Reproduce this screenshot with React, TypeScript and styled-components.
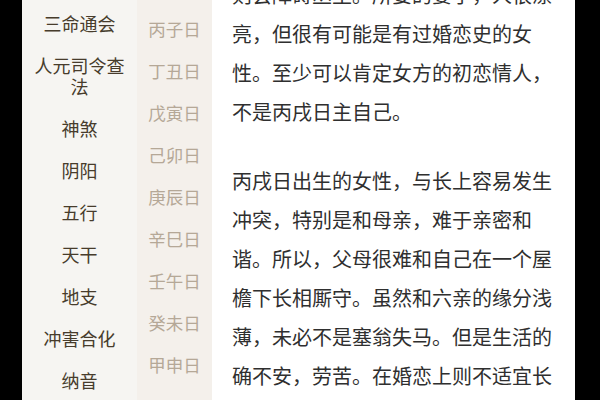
import styled, { createGlobalStyle } from "styled-components";

const GlobalStyle = createGlobalStyle`
  html, body {
    margin: 0;
    padding: 0;
    background: #000;
  }
  body {
    font-family: "Noto Sans CJK SC", "Noto Sans", sans-serif;
  }
  #root {
    height: 400px;
    overflow: hidden;
  }
`;

const Page = styled.div`
  display: flex;
  width: 600px;
  height: 400px;
  overflow: hidden;
  background: #000;
`;

const Edge = styled.div<{ $w: number }>`
  flex: 0 0 ${(p) => p.$w}px;
  background: #000;
`;

const Sidebar = styled.ul`
  flex: 0 0 115px;
  margin: 0;
  padding: 2px 0 0;
  list-style: none;
  background: #f6f5f2;
`;

const Category = styled.li`
  padding: 10.5px 8px;
  text-align: center;
  font-size: 18px;
  line-height: 21px;
  color: #473c2c;
`;

const DayList = styled.ul`
  flex: 0 0 75px;
  margin: 0;
  padding: 8px 0 0;
  list-style: none;
  background: #f4f0eb;
`;

const Day = styled.li`
  height: 42px;
  line-height: 42px;
  text-align: center;
  font-size: 17.5px;
  color: #b5a897;
`;

const Article = styled.article`
  flex: 0 0 363px;
  background: #fff;
  padding: 0 0 0 20px;
  box-sizing: border-box;
  overflow: hidden;
`;

const Body = styled.div`
  width: 320px;
  margin-top: -25px;
`;

const Para = styled.p`
  margin: 0 0 30px;
  font-size: 20px;
  line-height: 39px;
  color: #2f2f2f;
  word-break: break-all;
  line-break: strict;
`;

const categories = [
  "三命通会",
  "人元司令查法",
  "神煞",
  "阴阳",
  "五行",
  "天干",
  "地支",
  "冲害合化",
  "纳音",
];

const days = [
  "丙子日",
  "丁丑日",
  "戊寅日",
  "己卯日",
  "庚辰日",
  "辛巳日",
  "壬午日",
  "癸未日",
  "甲申日",
];

const App = () => {
  return (
    <>
      <GlobalStyle />
      <Page>
        <Edge $w={22} />
        <Sidebar>
          {categories.map((c) => (
            <Category key={c}>{c}</Category>
          ))}
        </Sidebar>
        <DayList>
          {days.map((d) => (
            <Day key={d}>{d}</Day>
          ))}
        </DayList>
        <Article>
          <Body>
            <Para>
              则会障碍丛生。所娶的妻子，人很漂亮，但很有可能是有过婚恋史的女性。至少可以肯定女方的初恋情人，不是丙戌日主自己。
            </Para>
            <Para>
              丙戌日出生的女性，与长上容易发生冲突，特别是和母亲，难于亲密和谐。所以，父母很难和自己在一个屋檐下长相厮守。虽然和六亲的缘分浅薄，未必不是塞翁失马。但是生活的确不安，劳苦。在婚恋上则不适宜长时间的恋爱，若对自己中意的男人长期交往。
            </Para>
          </Body>
        </Article>
        <Edge $w={25} />
      </Page>
    </>
  );
};

export default App;
